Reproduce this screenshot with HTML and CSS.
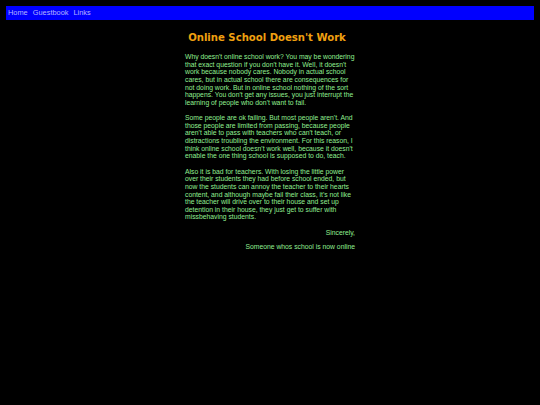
FILE: index.html
```html
<!DOCTYPE html>
<html>
<head>
<meta charset="utf-8">
<link rel="stylesheet" href="styles.css">
</head>
<body>
<nav class="nav">
  <a href="#">Home</a>
  <a href="#">Guestbook</a>
  <a href="#">Links</a>
</nav>
<h1 class="title">Online School Doesn't Work</h1>
<main class="article">
  <p>Why doesn't online school work? You may be wondering that exact question if you don't have it. Well, it doesn't work because nobody cares. Nobody in actual school cares, but in actual school there are consequences for not doing work. But in online school nothing of the sort happens. You don't get any issues, you just interrupt the learning of people who don't want to fail.</p>
  <p>Some people are ok failing. But most people aren't. And those people are limited from passing, because people aren't able to pass with teachers who can't teach, or distractions troubling the environment. For this reason, I think online school doesn't work well, because it doesn't enable the one thing school is supposed to do, teach.</p>
  <p>Also it is bad for teachers. With losing the little power over their students they had before school ended, but now the students can annoy the teacher to their hearts content, and although maybe fail their class, it's not like the teacher will drive over to their house and set up detention in their house, they just get to suffer with missbehaving students.</p>
  <p class="sign">Sincerely,</p>
  <p class="sign">Someone whos school is now online</p>
</main>
</body>
</html>
```

FILE: styles.css
```css
html, body {
  background: #000000;
}
body {
  margin: 6px;
  font-family: "Liberation Sans", Arial, sans-serif;
}
.nav {
  background: #0000ff;
  height: 13.5px;
  padding: 0 2px;
  display: flex;
  align-items: center;
  gap: 5px;
}
.nav a {
  color: #b4b4ff;
  text-decoration: none;
  font-size: 7.4px;
  line-height: 1;
}
.title {
  font-family: "DejaVu Sans", Verdana, sans-serif;
  font-weight: bold;
  font-size: 10.1px;
  color: #f0a010;
  text-align: center;
  margin: 12px 6px 9.5px 0;
  line-height: 12px;
}
.article {
  width: 170px;
  margin: 0 auto;
  color: #90ee90;
  font-size: 6.8px;
  line-height: 7.65px;
}
.article p {
  margin: 0 0 7.5px;
}
.article .sign {
  text-align: right;
  margin-bottom: 6.5px;
}
```
